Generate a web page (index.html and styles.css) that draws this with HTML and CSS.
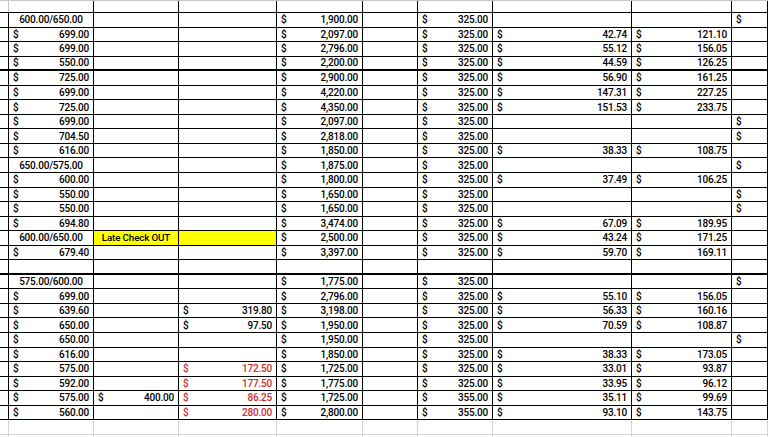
FILE: index.html
```html
<!DOCTYPE html>
<html>
<head>
<meta charset="utf-8">
<link rel="stylesheet" href="styles.css">
</head>
<body>
<div class="sheet">
  <div class="row head"><div class="c a g"></div><div class="c"></div><div class="c"></div><div class="c"></div><div class="c"></div><div class="c"></div><div class="c"></div><div class="c"></div><div class="c"></div><div class="c"></div></div>

  <div class="row"><div class="c a"></div><div class="c ctr">600.00/650.00</div><div class="c"></div><div class="c"></div><div class="c acc"><span>$</span><span>1,900.00</span></div><div class="c"></div><div class="c acc"><span>$</span><span>325.00</span></div><div class="c"></div><div class="c"></div><div class="c acc"><span>$</span></div></div>
  <div class="row"><div class="c a"></div><div class="c acc"><span>$</span><span>699.00</span></div><div class="c"></div><div class="c"></div><div class="c acc"><span>$</span><span>2,097.00</span></div><div class="c"></div><div class="c acc"><span>$</span><span>325.00</span></div><div class="c acc"><span>$</span><span>42.74</span></div><div class="c acc"><span>$</span><span>121.10</span></div><div class="c"></div></div>
  <div class="row"><div class="c a"></div><div class="c acc"><span>$</span><span>699.00</span></div><div class="c"></div><div class="c"></div><div class="c acc"><span>$</span><span>2,796.00</span></div><div class="c"></div><div class="c acc"><span>$</span><span>325.00</span></div><div class="c acc"><span>$</span><span>55.12</span></div><div class="c acc"><span>$</span><span>156.05</span></div><div class="c"></div></div>
  <div class="row thick"><div class="c a"></div><div class="c acc"><span>$</span><span>550.00</span></div><div class="c"></div><div class="c"></div><div class="c acc"><span>$</span><span>2,200.00</span></div><div class="c"></div><div class="c acc"><span>$</span><span>325.00</span></div><div class="c acc"><span>$</span><span>44.59</span></div><div class="c acc"><span>$</span><span>126.25</span></div><div class="c"></div></div>
  <div class="row"><div class="c a"></div><div class="c acc"><span>$</span><span>725.00</span></div><div class="c"></div><div class="c"></div><div class="c acc"><span>$</span><span>2,900.00</span></div><div class="c"></div><div class="c acc"><span>$</span><span>325.00</span></div><div class="c acc"><span>$</span><span>56.90</span></div><div class="c acc"><span>$</span><span>161.25</span></div><div class="c"></div></div>
  <div class="row"><div class="c a"></div><div class="c acc"><span>$</span><span>699.00</span></div><div class="c"></div><div class="c"></div><div class="c acc"><span>$</span><span>4,220.00</span></div><div class="c"></div><div class="c acc"><span>$</span><span>325.00</span></div><div class="c acc"><span>$</span><span>147.31</span></div><div class="c acc"><span>$</span><span>227.25</span></div><div class="c"></div></div>
  <div class="row"><div class="c a"></div><div class="c acc"><span>$</span><span>725.00</span></div><div class="c"></div><div class="c"></div><div class="c acc"><span>$</span><span>4,350.00</span></div><div class="c"></div><div class="c acc"><span>$</span><span>325.00</span></div><div class="c acc"><span>$</span><span>151.53</span></div><div class="c acc"><span>$</span><span>233.75</span></div><div class="c"></div></div>
  <div class="row"><div class="c a"></div><div class="c acc"><span>$</span><span>699.00</span></div><div class="c"></div><div class="c"></div><div class="c acc"><span>$</span><span>2,097.00</span></div><div class="c"></div><div class="c acc"><span>$</span><span>325.00</span></div><div class="c"></div><div class="c"></div><div class="c acc"><span>$</span></div></div>
  <div class="row"><div class="c a"></div><div class="c acc"><span>$</span><span>704.50</span></div><div class="c"></div><div class="c"></div><div class="c acc"><span>$</span><span>2,818.00</span></div><div class="c"></div><div class="c acc"><span>$</span><span>325.00</span></div><div class="c"></div><div class="c"></div><div class="c acc"><span>$</span></div></div>
  <div class="row"><div class="c a"></div><div class="c acc"><span>$</span><span>616.00</span></div><div class="c"></div><div class="c"></div><div class="c acc"><span>$</span><span>1,850.00</span></div><div class="c"></div><div class="c acc"><span>$</span><span>325.00</span></div><div class="c acc"><span>$</span><span>38.33</span></div><div class="c acc"><span>$</span><span>108.75</span></div><div class="c"></div></div>
  <div class="row"><div class="c a"></div><div class="c ctr">650.00/575.00</div><div class="c"></div><div class="c"></div><div class="c acc"><span>$</span><span>1,875.00</span></div><div class="c"></div><div class="c acc"><span>$</span><span>325.00</span></div><div class="c"></div><div class="c"></div><div class="c acc"><span>$</span></div></div>
  <div class="row"><div class="c a"></div><div class="c acc"><span>$</span><span>600.00</span></div><div class="c"></div><div class="c"></div><div class="c acc"><span>$</span><span>1,800.00</span></div><div class="c"></div><div class="c acc"><span>$</span><span>325.00</span></div><div class="c acc"><span>$</span><span>37.49</span></div><div class="c acc"><span>$</span><span>106.25</span></div><div class="c"></div></div>
  <div class="row"><div class="c a"></div><div class="c acc"><span>$</span><span>550.00</span></div><div class="c"></div><div class="c"></div><div class="c acc"><span>$</span><span>1,650.00</span></div><div class="c"></div><div class="c acc"><span>$</span><span>325.00</span></div><div class="c"></div><div class="c"></div><div class="c acc"><span>$</span></div></div>
  <div class="row"><div class="c a"></div><div class="c acc"><span>$</span><span>550.00</span></div><div class="c"></div><div class="c"></div><div class="c acc"><span>$</span><span>1,650.00</span></div><div class="c"></div><div class="c acc"><span>$</span><span>325.00</span></div><div class="c"></div><div class="c"></div><div class="c acc"><span>$</span></div></div>
  <div class="row"><div class="c a"></div><div class="c acc"><span>$</span><span>694.80</span></div><div class="c"></div><div class="c"></div><div class="c acc"><span>$</span><span>3,474.00</span></div><div class="c"></div><div class="c acc"><span>$</span><span>325.00</span></div><div class="c acc"><span>$</span><span>67.09</span></div><div class="c acc"><span>$</span><span>189.95</span></div><div class="c"></div></div>
  <div class="row"><div class="c a"></div><div class="c ctr">600.00/650.00</div><div class="c y ctr note">Late Check OUT</div><div class="c y"></div><div class="c acc"><span>$</span><span>2,500.00</span></div><div class="c"></div><div class="c acc"><span>$</span><span>325.00</span></div><div class="c acc"><span>$</span><span>43.24</span></div><div class="c acc"><span>$</span><span>171.25</span></div><div class="c"></div></div>
  <div class="row"><div class="c a"></div><div class="c acc"><span>$</span><span>679.40</span></div><div class="c"></div><div class="c"></div><div class="c acc"><span>$</span><span>3,397.00</span></div><div class="c"></div><div class="c acc"><span>$</span><span>325.00</span></div><div class="c acc"><span>$</span><span>59.70</span></div><div class="c acc"><span>$</span><span>169.11</span></div><div class="c"></div></div>
  <div class="row thick"><div class="c a"></div><div class="c"></div><div class="c"></div><div class="c"></div><div class="c"></div><div class="c"></div><div class="c"></div><div class="c"></div><div class="c"></div><div class="c"></div></div>
  <div class="row"><div class="c a"></div><div class="c ctr">575.00/600.00</div><div class="c"></div><div class="c"></div><div class="c acc"><span>$</span><span>1,775.00</span></div><div class="c"></div><div class="c acc"><span>$</span><span>325.00</span></div><div class="c"></div><div class="c"></div><div class="c acc"><span>$</span></div></div>
  <div class="row"><div class="c a"></div><div class="c acc"><span>$</span><span>699.00</span></div><div class="c"></div><div class="c"></div><div class="c acc"><span>$</span><span>2,796.00</span></div><div class="c"></div><div class="c acc"><span>$</span><span>325.00</span></div><div class="c acc"><span>$</span><span>55.10</span></div><div class="c acc"><span>$</span><span>156.05</span></div><div class="c"></div></div>
  <div class="row"><div class="c a"></div><div class="c acc"><span>$</span><span>639.60</span></div><div class="c"></div><div class="c acc"><span>$</span><span>319.80</span></div><div class="c acc"><span>$</span><span>3,198.00</span></div><div class="c"></div><div class="c acc"><span>$</span><span>325.00</span></div><div class="c acc"><span>$</span><span>56.33</span></div><div class="c acc"><span>$</span><span>160.16</span></div><div class="c"></div></div>
  <div class="row"><div class="c a"></div><div class="c acc"><span>$</span><span>650.00</span></div><div class="c"></div><div class="c acc"><span>$</span><span>97.50</span></div><div class="c acc"><span>$</span><span>1,950.00</span></div><div class="c"></div><div class="c acc"><span>$</span><span>325.00</span></div><div class="c acc"><span>$</span><span>70.59</span></div><div class="c acc"><span>$</span><span>108.87</span></div><div class="c"></div></div>
  <div class="row"><div class="c a"></div><div class="c acc"><span>$</span><span>650.00</span></div><div class="c"></div><div class="c"></div><div class="c acc"><span>$</span><span>1,950.00</span></div><div class="c"></div><div class="c acc"><span>$</span><span>325.00</span></div><div class="c"></div><div class="c"></div><div class="c acc"><span>$</span></div></div>
  <div class="row"><div class="c a"></div><div class="c acc"><span>$</span><span>616.00</span></div><div class="c"></div><div class="c"></div><div class="c acc"><span>$</span><span>1,850.00</span></div><div class="c"></div><div class="c acc"><span>$</span><span>325.00</span></div><div class="c acc"><span>$</span><span>38.33</span></div><div class="c acc"><span>$</span><span>173.05</span></div><div class="c"></div></div>
  <div class="row"><div class="c a"></div><div class="c acc"><span>$</span><span>575.00</span></div><div class="c"></div><div class="c acc red"><span>$</span><span>172.50</span></div><div class="c acc"><span>$</span><span>1,725.00</span></div><div class="c"></div><div class="c acc"><span>$</span><span>325.00</span></div><div class="c acc"><span>$</span><span>33.01</span></div><div class="c acc"><span>$</span><span>93.87</span></div><div class="c"></div></div>
  <div class="row"><div class="c a"></div><div class="c acc"><span>$</span><span>592.00</span></div><div class="c"></div><div class="c acc red"><span>$</span><span>177.50</span></div><div class="c acc"><span>$</span><span>1,775.00</span></div><div class="c"></div><div class="c acc"><span>$</span><span>325.00</span></div><div class="c acc"><span>$</span><span>33.95</span></div><div class="c acc"><span>$</span><span>96.12</span></div><div class="c"></div></div>
  <div class="row"><div class="c a"></div><div class="c acc"><span>$</span><span>575.00</span></div><div class="c acc"><span>$</span><span>400.00</span></div><div class="c acc red"><span>$</span><span>86.25</span></div><div class="c acc"><span>$</span><span>1,725.00</span></div><div class="c"></div><div class="c acc"><span>$</span><span>355.00</span></div><div class="c acc"><span>$</span><span>35.11</span></div><div class="c acc"><span>$</span><span>99.69</span></div><div class="c"></div></div>
  <div class="row"><div class="c a"></div><div class="c acc"><span>$</span><span>560.00</span></div><div class="c"></div><div class="c acc red"><span>$</span><span>280.00</span></div><div class="c acc"><span>$</span><span>2,800.00</span></div><div class="c"></div><div class="c acc"><span>$</span><span>355.00</span></div><div class="c acc"><span>$</span><span>93.10</span></div><div class="c acc"><span>$</span><span>143.75</span></div><div class="c"></div></div>

  <div class="row empty"><div class="c"></div><div class="c"></div><div class="c"></div><div class="c"></div><div class="c"></div><div class="c"></div><div class="c"></div><div class="c"></div><div class="c"></div><div class="c"></div></div>
  <div class="row empty"><div class="c"></div><div class="c"></div><div class="c"></div><div class="c"></div><div class="c"></div><div class="c"></div><div class="c"></div><div class="c"></div><div class="c"></div><div class="c"></div></div>
</div>
</body>
</html>
```

FILE: styles.css
```css
html, body {
  margin: 0;
  padding: 0;
  background: #ffffff;
  overflow: hidden;
}

.sheet {
  width: 768px;
  height: 437px;
  overflow: hidden;
  font-family: Roboto, "Liberation Sans", Arial, sans-serif;
  font-size: 10px;
  font-weight: 500;
  letter-spacing: -0.2px;
  color: #000;
}

.row {
  display: grid;
  grid-template-columns: 9px 85px 85px 98px 86px 55px 75px 139px 100px 1fr;
  height: 14.55px;
  box-sizing: border-box;
  border-bottom: 1px solid #000;
}

.row.thick {
  border-bottom-width: 2px;
}

.row.head {
  height: 13px;
  border-top: 1px solid #c8c8c8;
}

.row.empty {
  border-bottom-color: #d4d4d4;
}

.row.empty .c {
  border-right-color: #d4d4d4;
}

.c {
  box-sizing: border-box;
  border-right: 1px solid #000;
  display: flex;
  align-items: center;
  padding: 0 4px;
  white-space: nowrap;
  overflow: hidden;
  line-height: 13px;
}

.c.a {
  padding: 0;
}

.head .c.g {
  border-right-color: #c8c8c8;
}

.acc {
  justify-content: space-between;
}

.ctr {
  justify-content: center;
}

.y {
  background: #ffff00;
}

.note {
  font-size: 9.8px;
  font-weight: 500;
  letter-spacing: -0.15px;
}

.red {
  color: #d42a2a;
}
```
